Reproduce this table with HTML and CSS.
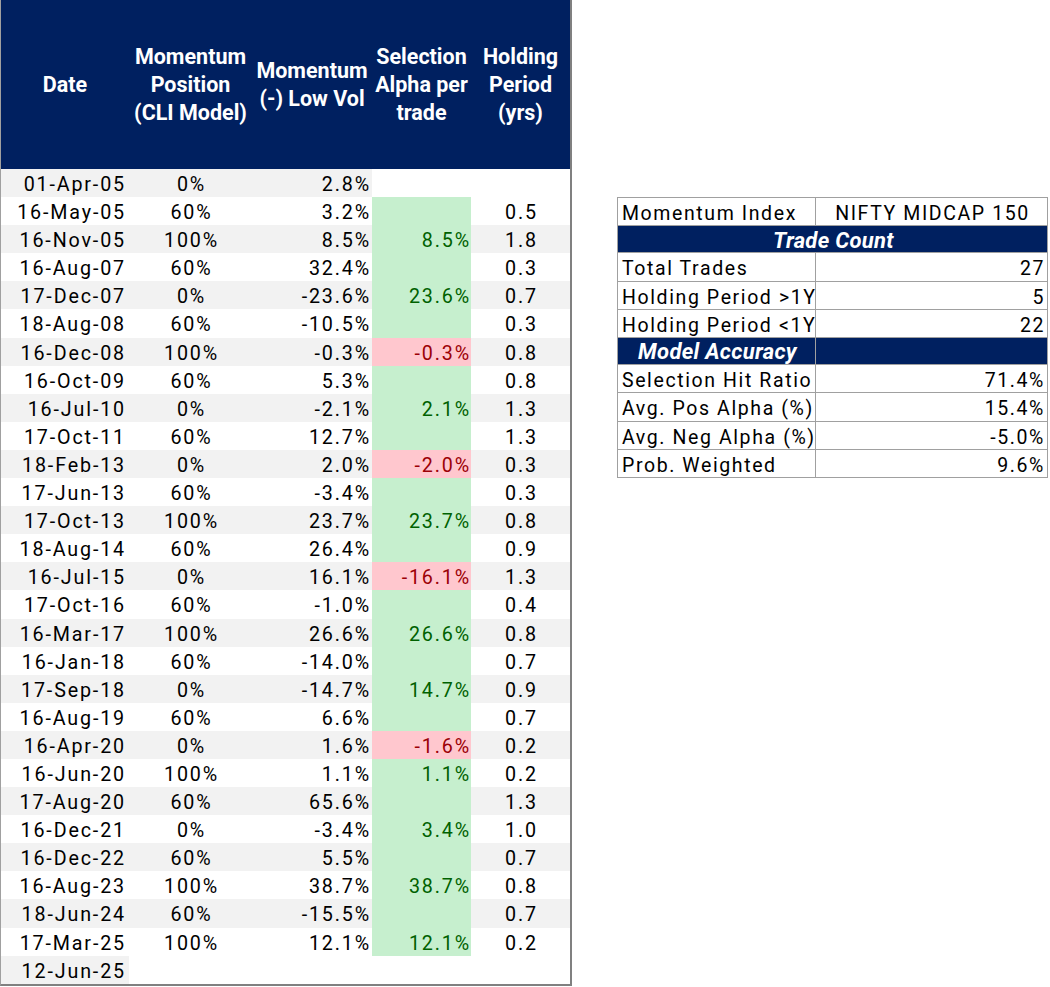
FILE: index.html
```html
<!DOCTYPE html>
<html>
<head>
<meta charset="utf-8">
<link rel="stylesheet" href="styles.css">
</head>
<body>
<div class="page">
  <div class="main">
    <div class="head">
      <div class="hc">Date</div>
      <div class="hc">Momentum<br>Position<br>(CLI Model)</div>
      <div class="hc">Momentum<br>(-) Low Vol</div>
      <div class="hc">Selection<br>Alpha per<br>trade</div>
      <div class="hc">Holding<br>Period<br>(yrs)</div>
    </div>
    <div class="row odd"><div class="c d">01-Apr-05</div><div class="c p">0%</div><div class="c m">2.8%</div><div class="c a blank"></div><div class="c h blank"></div></div>
    <div class="row"><div class="c d">16-May-05</div><div class="c p">60%</div><div class="c m">3.2%</div><div class="c a pos"></div><div class="c h">0.5</div></div>
    <div class="row odd"><div class="c d">16-Nov-05</div><div class="c p">100%</div><div class="c m">8.5%</div><div class="c a pos">8.5%</div><div class="c h">1.8</div></div>
    <div class="row"><div class="c d">16-Aug-07</div><div class="c p">60%</div><div class="c m">32.4%</div><div class="c a pos"></div><div class="c h">0.3</div></div>
    <div class="row odd"><div class="c d">17-Dec-07</div><div class="c p">0%</div><div class="c m">-23.6%</div><div class="c a pos">23.6%</div><div class="c h">0.7</div></div>
    <div class="row"><div class="c d">18-Aug-08</div><div class="c p">60%</div><div class="c m">-10.5%</div><div class="c a pos"></div><div class="c h">0.3</div></div>
    <div class="row odd"><div class="c d">16-Dec-08</div><div class="c p">100%</div><div class="c m">-0.3%</div><div class="c a neg">-0.3%</div><div class="c h">0.8</div></div>
    <div class="row"><div class="c d">16-Oct-09</div><div class="c p">60%</div><div class="c m">5.3%</div><div class="c a pos"></div><div class="c h">0.8</div></div>
    <div class="row odd"><div class="c d">16-Jul-10</div><div class="c p">0%</div><div class="c m">-2.1%</div><div class="c a pos">2.1%</div><div class="c h">1.3</div></div>
    <div class="row"><div class="c d">17-Oct-11</div><div class="c p">60%</div><div class="c m">12.7%</div><div class="c a pos"></div><div class="c h">1.3</div></div>
    <div class="row odd"><div class="c d">18-Feb-13</div><div class="c p">0%</div><div class="c m">2.0%</div><div class="c a neg">-2.0%</div><div class="c h">0.3</div></div>
    <div class="row"><div class="c d">17-Jun-13</div><div class="c p">60%</div><div class="c m">-3.4%</div><div class="c a pos"></div><div class="c h">0.3</div></div>
    <div class="row odd"><div class="c d">17-Oct-13</div><div class="c p">100%</div><div class="c m">23.7%</div><div class="c a pos">23.7%</div><div class="c h">0.8</div></div>
    <div class="row"><div class="c d">18-Aug-14</div><div class="c p">60%</div><div class="c m">26.4%</div><div class="c a pos"></div><div class="c h">0.9</div></div>
    <div class="row odd"><div class="c d">16-Jul-15</div><div class="c p">0%</div><div class="c m">16.1%</div><div class="c a neg">-16.1%</div><div class="c h">1.3</div></div>
    <div class="row"><div class="c d">17-Oct-16</div><div class="c p">60%</div><div class="c m">-1.0%</div><div class="c a pos"></div><div class="c h">0.4</div></div>
    <div class="row odd"><div class="c d">16-Mar-17</div><div class="c p">100%</div><div class="c m">26.6%</div><div class="c a pos">26.6%</div><div class="c h">0.8</div></div>
    <div class="row"><div class="c d">16-Jan-18</div><div class="c p">60%</div><div class="c m">-14.0%</div><div class="c a pos"></div><div class="c h">0.7</div></div>
    <div class="row odd"><div class="c d">17-Sep-18</div><div class="c p">0%</div><div class="c m">-14.7%</div><div class="c a pos">14.7%</div><div class="c h">0.9</div></div>
    <div class="row"><div class="c d">16-Aug-19</div><div class="c p">60%</div><div class="c m">6.6%</div><div class="c a pos"></div><div class="c h">0.7</div></div>
    <div class="row odd"><div class="c d">16-Apr-20</div><div class="c p">0%</div><div class="c m">1.6%</div><div class="c a neg">-1.6%</div><div class="c h">0.2</div></div>
    <div class="row"><div class="c d">16-Jun-20</div><div class="c p">100%</div><div class="c m">1.1%</div><div class="c a pos">1.1%</div><div class="c h">0.2</div></div>
    <div class="row odd"><div class="c d">17-Aug-20</div><div class="c p">60%</div><div class="c m">65.6%</div><div class="c a pos"></div><div class="c h">1.3</div></div>
    <div class="row"><div class="c d">16-Dec-21</div><div class="c p">0%</div><div class="c m">-3.4%</div><div class="c a pos">3.4%</div><div class="c h">1.0</div></div>
    <div class="row odd"><div class="c d">16-Dec-22</div><div class="c p">60%</div><div class="c m">5.5%</div><div class="c a pos"></div><div class="c h">0.7</div></div>
    <div class="row"><div class="c d">16-Aug-23</div><div class="c p">100%</div><div class="c m">38.7%</div><div class="c a pos">38.7%</div><div class="c h">0.8</div></div>
    <div class="row odd"><div class="c d">18-Jun-24</div><div class="c p">60%</div><div class="c m">-15.5%</div><div class="c a pos"></div><div class="c h">0.7</div></div>
    <div class="row"><div class="c d">17-Mar-25</div><div class="c p">100%</div><div class="c m">12.1%</div><div class="c a pos">12.1%</div><div class="c h">0.2</div></div>
    <div class="row last"><div class="c d">12-Jun-25</div><div class="c p blank"></div><div class="c m blank"></div><div class="c a blank"></div><div class="c h blank"></div></div>
  </div>

  <div class="side">
    <table class="summary">
      <tr><td class="lbl">Momentum Index</td><td class="ctr">NIFTY MIDCAP 150</td></tr>
      <tr class="band"><td colspan="2" class="ctr">Trade Count</td></tr>
      <tr><td class="lbl">Total Trades</td><td class="val">27</td></tr>
      <tr><td class="lbl">Holding Period &gt;1Y</td><td class="val">5</td></tr>
      <tr><td class="lbl">Holding Period &lt;1Y</td><td class="val">22</td></tr>
      <tr class="band"><td class="ctr">Model Accuracy</td><td></td></tr>
      <tr><td class="lbl">Selection Hit Ratio</td><td class="val">71.4%</td></tr>
      <tr><td class="lbl">Avg. Pos Alpha (%)</td><td class="val">15.4%</td></tr>
      <tr><td class="lbl">Avg. Neg Alpha (%)</td><td class="val">-5.0%</td></tr>
      <tr><td class="lbl">Prob. Weighted</td><td class="val">9.6%</td></tr>
    </table>
  </div>
</div>
</body>
</html>
```

FILE: styles.css
```css
html, body {
  margin: 0;
  padding: 0;
  background: #ffffff;
}

body {
  font-family: Roboto, "Liberation Sans", sans-serif;
  color: #000000;
}

.page {
  display: flex;
  align-items: flex-start;
}

.main {
  width: 569px;
  border-left: 1px solid #a0a0a0;
  border-right: 2px solid #808080;
  border-bottom: 2px solid #808080;
}

.head,
.row {
  display: grid;
  grid-template-columns: 128px 123px 120px 99px 99px;
}

.head {
  height: 169px;
  background: #002060;
  align-items: center;
}

.hc {
  color: #ffffff;
  font-weight: 700;
  font-size: 21.5px;
  line-height: 28px;
  text-align: center;
  white-space: nowrap;
}

.row {
  height: 28.1px;
}

.c {
  font-size: 19.7px;
  letter-spacing: 1.85px;
  padding-top: 4px;
  line-height: 24.1px;
  white-space: nowrap;
  overflow: visible;
}

.row.odd .c,
.row.last .d {
  background: #f2f2f2;
}

.d {
  text-align: right;
  padding-right: 3px;
}

.p {
  text-align: center;
  padding-left: 2px;
}

.m {
  text-align: right;
  padding-right: 1px;
}

.a {
  text-align: right;
  padding-right: 0;
}

.h {
  text-align: center;
  padding-left: 2px;
}

.row .c.pos {
  background: #c6efce;
  color: #006100;
}

.row .c.neg {
  background: #ffc7ce;
  color: #9c0006;
}

.row .c.blank {
  background: #ffffff;
}

.side {
  padding-top: 197px;
  margin-left: 45px;
}

.summary {
  border-collapse: collapse;
  table-layout: fixed;
  width: 431px;
  font-size: 19.5px;
  letter-spacing: 1.6px;
}

.summary td {
  border: 1px solid #a0a0a0;
  height: 27.2px;
  padding: 4px 2px 0 4px;
  line-height: 23.2px;
  white-space: nowrap;
  box-sizing: border-box;
}

.summary td:first-child {
  width: 198px;
}

.summary .val {
  text-align: right;
}

.summary .ctr {
  text-align: center;
}

.summary .band td {
  background: #002060;
  color: #ffffff;
  font-weight: 700;
  font-style: italic;
  letter-spacing: 0.3px;
  font-size: 22px;
  padding-top: 2px;
}
```
